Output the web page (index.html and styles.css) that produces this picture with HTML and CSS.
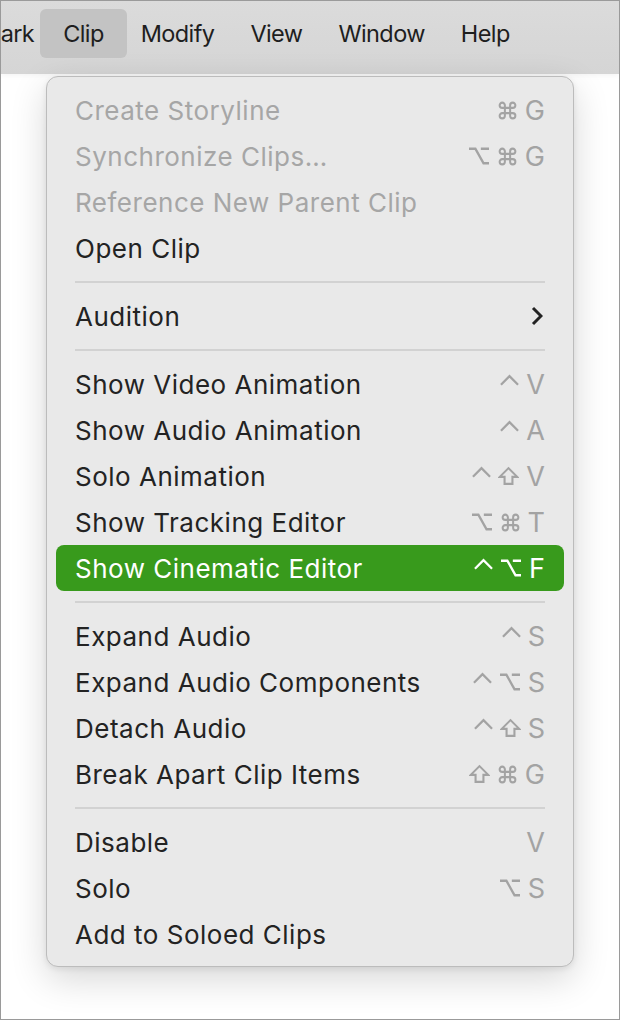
FILE: index.html
```html
<!DOCTYPE html>
<html>
<head>
<meta charset="utf-8">
<link rel="stylesheet" href="styles.css">
</head>
<body>
<div class="frame">
  <div class="menubar">
    <span class="bar-item bar-first">Mark</span>
    <span class="bar-item bar-active">Clip</span>
    <span class="bar-item">Modify</span>
    <span class="bar-item">View</span>
    <span class="bar-item">Window</span>
    <span class="bar-item">Help</span>
  </div>

  <div class="menu">
    <div class="row disabled"><span class="label">Create Storyline</span><span class="keys"><svg class="k k-cmd" viewBox="0 0 24 24"><path d="M18 3a3 3 0 0 0-3 3v12a3 3 0 0 0 3 3 3 3 0 0 0 3-3 3 3 0 0 0-3-3H6a3 3 0 0 0-3 3 3 3 0 0 0 3 3 3 3 0 0 0 3-3V6a3 3 0 0 0-3-3 3 3 0 0 0-3 3 3 3 0 0 0 3 3h12a3 3 0 0 0 3-3 3 3 0 0 0-3-3z"/></svg><span class="ch">G</span></span></div>
    <div class="row disabled"><span class="label">Synchronize Clips…</span><span class="keys"><svg class="k k-opt" viewBox="0 0 24 22"><path d="M1 3h7l9 16h6M14 3h9"/></svg><svg class="k k-cmd" viewBox="0 0 24 24"><path d="M18 3a3 3 0 0 0-3 3v12a3 3 0 0 0 3 3 3 3 0 0 0 3-3 3 3 0 0 0-3-3H6a3 3 0 0 0-3 3 3 3 0 0 0 3 3 3 3 0 0 0 3-3V6a3 3 0 0 0-3-3 3 3 0 0 0-3 3 3 3 0 0 0 3 3h12a3 3 0 0 0 3-3 3 3 0 0 0-3-3z"/></svg><span class="ch">G</span></span></div>
    <div class="row disabled"><span class="label">Reference New Parent Clip</span></div>
    <div class="row"><span class="label">Open Clip</span></div>
    <div class="sep"></div>
    <div class="row"><span class="label">Audition</span><svg class="chev" viewBox="0 0 12 20"><path d="M2 2l8 8-8 8"/></svg></div>
    <div class="sep"></div>
    <div class="row"><span class="label">Show Video Animation</span><span class="keys"><svg class="k k-ctl" viewBox="0 0 20 12"><path d="M1 11l9-9 9 9"/></svg><span class="ch">V</span></span></div>
    <div class="row"><span class="label">Show Audio Animation</span><span class="keys"><svg class="k k-ctl" viewBox="0 0 20 12"><path d="M1 11l9-9 9 9"/></svg><span class="ch">A</span></span></div>
    <div class="row"><span class="label">Solo Animation</span><span class="keys"><svg class="k k-ctl" viewBox="0 0 20 12"><path d="M1 11l9-9 9 9"/></svg><svg class="k k-shift" viewBox="0 0 24 22"><path d="M12 2L2 12h5.5v8h9v-8H22z"/></svg><span class="ch">V</span></span></div>
    <div class="row"><span class="label">Show Tracking Editor</span><span class="keys"><svg class="k k-opt" viewBox="0 0 24 22"><path d="M1 3h7l9 16h6M14 3h9"/></svg><svg class="k k-cmd" viewBox="0 0 24 24"><path d="M18 3a3 3 0 0 0-3 3v12a3 3 0 0 0 3 3 3 3 0 0 0 3-3 3 3 0 0 0-3-3H6a3 3 0 0 0-3 3 3 3 0 0 0 3 3 3 3 0 0 0 3-3V6a3 3 0 0 0-3-3 3 3 0 0 0-3 3 3 3 0 0 0 3 3h12a3 3 0 0 0 3-3 3 3 0 0 0-3-3z"/></svg><span class="ch">T</span></span></div>
    <div class="row selected"><span class="label">Show Cinematic Editor</span><span class="keys"><svg class="k k-ctl" viewBox="0 0 20 12"><path d="M1 11l9-9 9 9"/></svg><svg class="k k-opt" viewBox="0 0 24 22"><path d="M1 3h7l9 16h6M14 3h9"/></svg><span class="ch">F</span></span></div>
    <div class="sep"></div>
    <div class="row"><span class="label">Expand Audio</span><span class="keys"><svg class="k k-ctl" viewBox="0 0 20 12"><path d="M1 11l9-9 9 9"/></svg><span class="ch">S</span></span></div>
    <div class="row"><span class="label">Expand Audio Components</span><span class="keys"><svg class="k k-ctl" viewBox="0 0 20 12"><path d="M1 11l9-9 9 9"/></svg><svg class="k k-opt" viewBox="0 0 24 22"><path d="M1 3h7l9 16h6M14 3h9"/></svg><span class="ch">S</span></span></div>
    <div class="row"><span class="label">Detach Audio</span><span class="keys"><svg class="k k-ctl" viewBox="0 0 20 12"><path d="M1 11l9-9 9 9"/></svg><svg class="k k-shift" viewBox="0 0 24 22"><path d="M12 2L2 12h5.5v8h9v-8H22z"/></svg><span class="ch">S</span></span></div>
    <div class="row"><span class="label">Break Apart Clip Items</span><span class="keys"><svg class="k k-shift" viewBox="0 0 24 22"><path d="M12 2L2 12h5.5v8h9v-8H22z"/></svg><svg class="k k-cmd" viewBox="0 0 24 24"><path d="M18 3a3 3 0 0 0-3 3v12a3 3 0 0 0 3 3 3 3 0 0 0 3-3 3 3 0 0 0-3-3H6a3 3 0 0 0-3 3 3 3 0 0 0 3 3 3 3 0 0 0 3-3V6a3 3 0 0 0-3-3 3 3 0 0 0-3 3 3 3 0 0 0 3 3h12a3 3 0 0 0 3-3 3 3 0 0 0-3-3z"/></svg><span class="ch">G</span></span></div>
    <div class="sep"></div>
    <div class="row"><span class="label">Disable</span><span class="keys"><span class="ch">V</span></span></div>
    <div class="row"><span class="label">Solo</span><span class="keys"><svg class="k k-opt" viewBox="0 0 24 22"><path d="M1 3h7l9 16h6M14 3h9"/></svg><span class="ch">S</span></span></div>
    <div class="row"><span class="label">Add to Soloed Clips</span></div>
  </div>
</div>
</body>
</html>
```

FILE: styles.css
```css
html, body {
  margin: 0;
  padding: 0;
  background: #ffffff;
}

.frame {
  width: 620px;
  height: 1020px;
  box-sizing: border-box;
  border: 1px solid #9a9a9a;
  background: #ffffff;
  overflow: hidden;
  font-family: Inter, "Liberation Sans", sans-serif;
}

.menubar {
  height: 73px;
  box-sizing: border-box;
  padding-top: 8px;
  background: linear-gradient(#dbdbdb, #d5d5d5);
  display: flex;
  align-items: flex-start;
  white-space: nowrap;
  font-size: 23.5px;
  letter-spacing: -0.6px;
  color: #1e1e1e;
  box-shadow: 0 1px 6px rgba(0, 0, 0, 0.06);
}

.bar-item {
  padding: 0 18px;
  line-height: 49px;
  border-radius: 6px;
}

.bar-first {
  margin-left: -21px;
  padding: 0;
}

.bar-active {
  background: #c3c3c3;
  padding: 0 23px;
  margin: 0 -4px 0 6px;
}

.menu {
  margin: 2px 0 0 45px;
  width: 528px;
  box-sizing: border-box;
  background: #e9e9e9;
  border: 1px solid #bcbcbc;
  border-radius: 12px;
  box-shadow: 0 12px 36px rgba(0, 0, 0, 0.16), 0 2px 6px rgba(0, 0, 0, 0.08);
  padding: 10px 9px 9px 9px;
  font-size: 26px;
  letter-spacing: 0.5px;
  color: #232323;
}

.row {
  height: 46px;
  display: flex;
  align-items: center;
  justify-content: space-between;
  padding: 0 19px;
  border-radius: 8px;
}

.row.disabled {
  color: #a6a6a6;
}

.row.selected {
  background: #389a1c;
  color: #ffffff;
}

.sep {
  height: 2px;
  background: #d2d2d2;
  margin: 10px 19px;
}

.keys {
  display: flex;
  align-items: center;
  gap: 7px;
  color: #a3a3a3;
  letter-spacing: 0;
}

.row.selected .keys {
  color: #ffffff;
}

.ch {
  font-size: 27px;
  line-height: 1;
}

.k {
  fill: none;
  stroke: currentColor;
  stroke-width: 2.3;
  stroke-linejoin: miter;
}

.k-cmd {
  width: 21px;
  height: 21px;
  stroke-width: 2.3;
}

.k-opt {
  width: 22px;
  height: 20px;
  stroke-width: 2.6;
}

.k-ctl {
  width: 19px;
  height: 12px;
  margin-bottom: 9px;
  stroke-width: 2.4;
}

.k-shift {
  width: 21px;
  height: 20px;
  stroke-width: 2.4;
}

.chev {
  width: 12px;
  height: 20px;
  margin-right: 2px;
  fill: none;
  stroke: #232323;
  stroke-width: 3;
}
```
